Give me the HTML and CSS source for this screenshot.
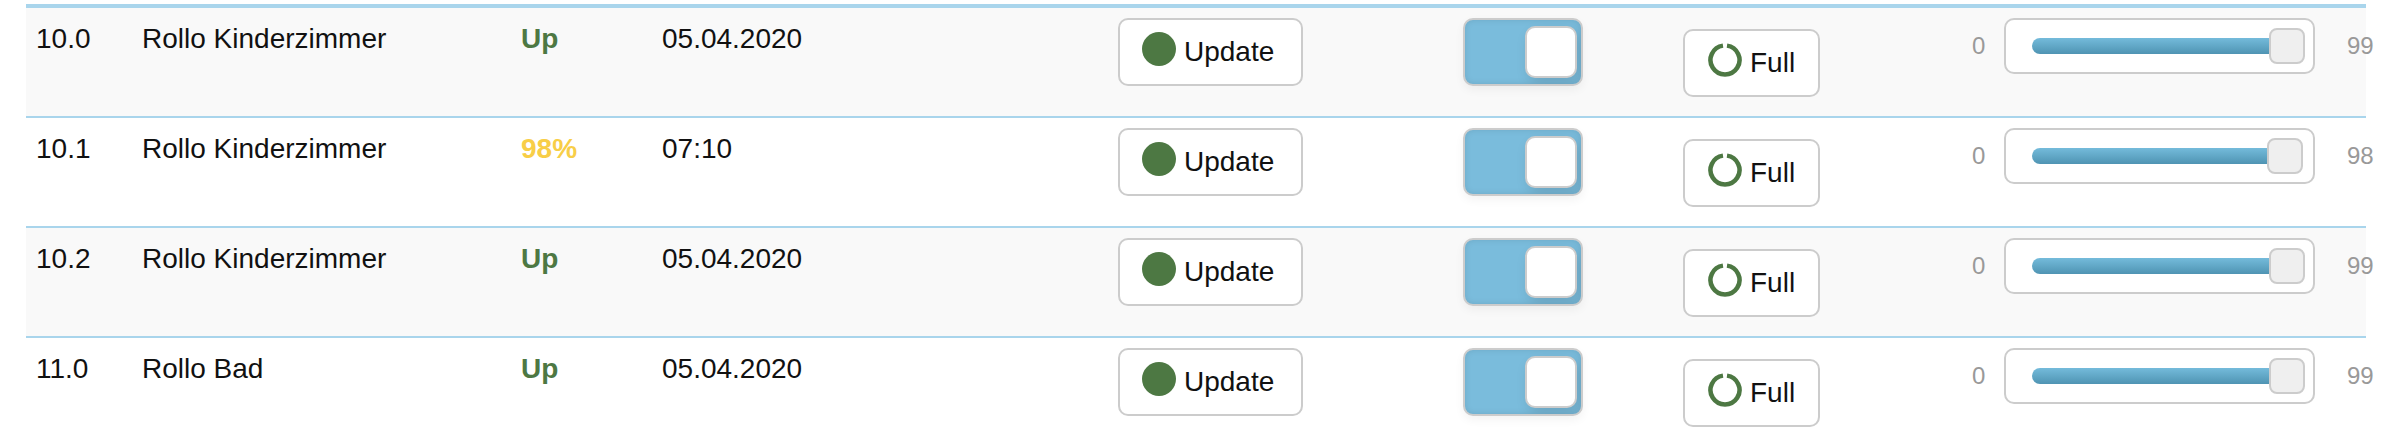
FILE: index.html
```html
<!DOCTYPE html>
<html lang="en">
<head>
    <meta charset="UTF-8">
    <title>Rollos</title>
    <link rel="stylesheet" href="styles.css">
</head>
<body>
    <div class="device-list">
        <div class="device odd">
            <div class="cell id">10.0</div>
            <div class="cell name">Rollo Kinderzimmer</div>
            <div class="cell status up">Up</div>
            <div class="cell date">05.04.2020</div>
            <div class="cell update-col">
                <button class="btn update-btn" type="button"><svg class="icon" viewBox="0 0 34 34"><circle cx="17" cy="17" r="17"/></svg>Update</button>
            </div>
            <div class="cell toggle-col"><div class="toggle"><span class="knob"></span></div></div>
            <div class="cell full-col">
                <button class="btn full-btn" type="button"><svg class="icon" viewBox="0 0 34 34"><path d="M19 2.64A14.5 14.5 0 1 1 15 2.64"/></svg>Full</button>
            </div>
            <div class="cell min">0</div>
            <div class="cell slider-col"><div class="slider"><div class="track" style="width: 255px"><span class="handle"></span></div></div></div>
            <div class="cell max">99</div>
        </div>
        <div class="device">
            <div class="cell id">10.1</div>
            <div class="cell name">Rollo Kinderzimmer</div>
            <div class="cell status moving">98%</div>
            <div class="cell date">07:10</div>
            <div class="cell update-col">
                <button class="btn update-btn" type="button"><svg class="icon" viewBox="0 0 34 34"><circle cx="17" cy="17" r="17"/></svg>Update</button>
            </div>
            <div class="cell toggle-col"><div class="toggle"><span class="knob"></span></div></div>
            <div class="cell full-col">
                <button class="btn full-btn" type="button"><svg class="icon" viewBox="0 0 34 34"><path d="M19 2.64A14.5 14.5 0 1 1 15 2.64"/></svg>Full</button>
            </div>
            <div class="cell min">0</div>
            <div class="cell slider-col"><div class="slider"><div class="track" style="width: 253px"><span class="handle"></span></div></div></div>
            <div class="cell max">98</div>
        </div>
        <div class="device odd">
            <div class="cell id">10.2</div>
            <div class="cell name">Rollo Kinderzimmer</div>
            <div class="cell status up">Up</div>
            <div class="cell date">05.04.2020</div>
            <div class="cell update-col">
                <button class="btn update-btn" type="button"><svg class="icon" viewBox="0 0 34 34"><circle cx="17" cy="17" r="17"/></svg>Update</button>
            </div>
            <div class="cell toggle-col"><div class="toggle"><span class="knob"></span></div></div>
            <div class="cell full-col">
                <button class="btn full-btn" type="button"><svg class="icon" viewBox="0 0 34 34"><path d="M19 2.64A14.5 14.5 0 1 1 15 2.64"/></svg>Full</button>
            </div>
            <div class="cell min">0</div>
            <div class="cell slider-col"><div class="slider"><div class="track" style="width: 255px"><span class="handle"></span></div></div></div>
            <div class="cell max">99</div>
        </div>
        <div class="device last">
            <div class="cell id">11.0</div>
            <div class="cell name">Rollo Bad</div>
            <div class="cell status up">Up</div>
            <div class="cell date">05.04.2020</div>
            <div class="cell update-col">
                <button class="btn update-btn" type="button"><svg class="icon" viewBox="0 0 34 34"><circle cx="17" cy="17" r="17"/></svg>Update</button>
            </div>
            <div class="cell toggle-col"><div class="toggle"><span class="knob"></span></div></div>
            <div class="cell full-col">
                <button class="btn full-btn" type="button"><svg class="icon" viewBox="0 0 34 34"><path d="M19 2.64A14.5 14.5 0 1 1 15 2.64"/></svg>Full</button>
            </div>
            <div class="cell min">0</div>
            <div class="cell slider-col"><div class="slider"><div class="track" style="width: 255px"><span class="handle"></span></div></div></div>
            <div class="cell max">99</div>
        </div>
    </div>
</body>
</html>
```

FILE: styles.css
```css
html, body {
    margin: 0;
    height: 436px;
    overflow: hidden;
    background-color: #fff;
}
body {
    padding: 4px 26px 0;
    box-sizing: border-box;
    font-family: "Liberation Sans", Arial, sans-serif;
    font-size: 28px;
    line-height: 40px;
    color: #111;
}
.device-list {
    width: 2340px;
    border-top: 4px solid #a9d5ec;
}
.device {
    display: grid;
    grid-template-columns: 10px 106px 379px 141px 456px 345px 220px 289px 32px 343px 19px;
    height: 110px;
    box-sizing: border-box;
    border-bottom: 2px solid #a9d5ec;
}
.device.odd {
    background-color: #f9f9f9;
}
.device.last {
    height: 98px;
    border-bottom: none;
}
.cell {
    padding-top: 10px;
}
.id {
    grid-column: 2;
}
.id, .name, .status, .date {
    padding-top: 11px;
}
.status {
    font-weight: bold;
}
.up {
    color: #4d7843;
}
.moving {
    color: #f8ce47;
}
.min, .max {
    padding-top: 18px;
    font-size: 24px;
    color: #999;
    white-space: nowrap;
}
.btn {
    display: flex;
    align-items: center;
    box-sizing: border-box;
    height: 68px;
    margin: 0;
    border: 2px solid #ccc;
    border-radius: 10px;
    background-color: #fff;
    font-family: inherit;
    font-size: 28px;
    color: #111;
    cursor: pointer;
}
.update-btn {
    width: 185px;
    padding: 0 0 0 22px;
}
.full-btn {
    width: 137px;
    margin-top: 11px;
    padding: 0 0 0 23px;
}
.icon {
    width: 34px;
    height: 34px;
    margin: 0 8px 6px 0;
}
.icon circle {
    fill: #4d7843;
}
.icon path {
    fill: none;
    stroke: #4d7843;
    stroke-width: 4.5;
}
.toggle {
    display: flex;
    align-items: center;
    justify-content: flex-end;
    box-sizing: border-box;
    width: 120px;
    height: 68px;
    padding-right: 4px;
    border: 2px solid #ccc;
    border-radius: 10px;
    overflow: hidden;
    background-color: #7abcdc;
    box-shadow: 0 4px 10px rgba(0, 0, 0, 0.05), inset 0 0 6px rgba(0, 0, 0, 0.1);
}
.knob {
    box-sizing: border-box;
    width: 52px;
    height: 52px;
    border: 2px solid #ccc;
    border-radius: 10px;
    background-color: #fff;
    box-shadow: 4px 6px 14px rgba(0, 0, 0, 0.12);
}
.slider {
    box-sizing: border-box;
    width: 311px;
    height: 56px;
    padding: 18px 0 0 26px;
    border: 2px solid #ccc;
    border-radius: 10px;
    background-color: #fff;
}
.track {
    position: relative;
    height: 16px;
    border-radius: 8px 0 0 8px;
    background: linear-gradient(#74bbdb, #4f94b3);
}
.handle {
    position: absolute;
    top: -10px;
    right: -18px;
    box-sizing: border-box;
    width: 36px;
    height: 36px;
    border: 2px solid #ccc;
    border-radius: 8px;
    background-color: #efefef;
}
```
